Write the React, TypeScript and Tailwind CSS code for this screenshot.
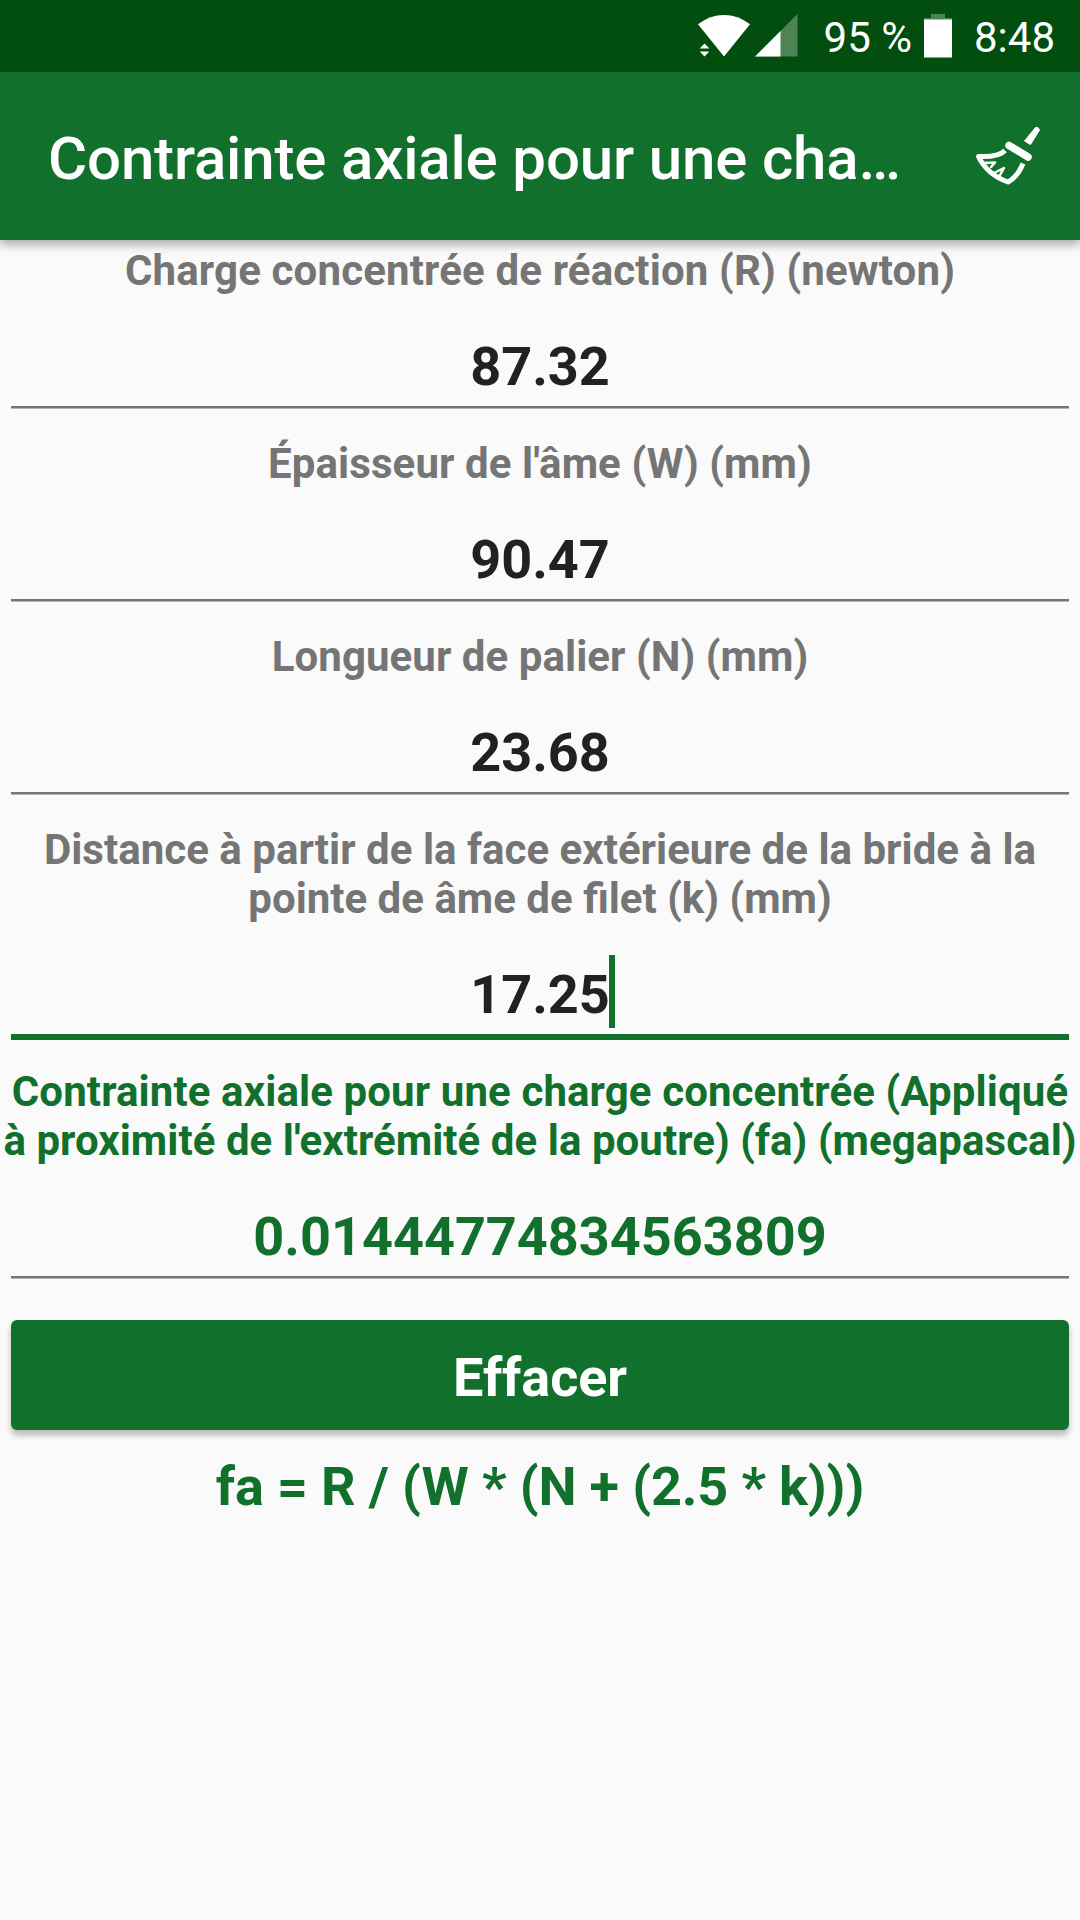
import React from 'react';

interface LabelLine {
  text: string;
  tracking?: string;
}

interface FieldProps {
  label: LabelLine[];
  value: string;
  focused?: boolean;
  result?: boolean;
}

const WifiIcon = () => (
  <svg width="56" height="44" viewBox="0 0 56 44" fill="#fff">
    <path d="M27 42.5 L1 10.3 Q13 1 27 1 Q41 1 53 10.3 Z" />
    <path d="M7.5 29.5 L12.3 34.5 H2.7 Z M7.5 42.5 L2.7 37.5 H12.3 Z" />
  </svg>
);

const SignalIcon = () => (
  <svg width="43" height="44" viewBox="0 0 43 44" fill="#fff">
    <path d="M0 42.5 L42.5 0 V42.5 Z" opacity="0.3" />
    <path d="M0 42.5 L25.5 17 V42.5 Z" />
  </svg>
);

const BatteryIcon = () => (
  <svg width="28" height="44" viewBox="0 0 28 44" fill="#fff">
    <path d="M7 0 H21 V4 H28 V6 H0 V4 H7 Z" opacity="0.3" />
    <path d="M0 5.5 H28 V43.5 H0 Z" />
  </svg>
);

const BroomIcon = () => (
  <svg width="66" height="62" viewBox="0 0 66 62" fill="none" stroke="#fff" strokeLinejoin="round">
    <path d="M59.5 2.5 Q62.5 1.5 63.5 5 L54.5 19.5 L48.5 16 Z" fill="#fff" strokeWidth="1" />
    <path d="M33 20.5 L52 32" strokeWidth="7.5" strokeLinecap="round" />
    <path d="M29 25.5 C24 31 13 32 2.5 31.5 C8 43 18 52 32 57 C39 53 44 46 47 38.5" strokeWidth="5" />
    <path d="M8 38 L19 37.5 L15 42 M18 48 L28 43 L24 50" strokeWidth="2.5" strokeLinecap="round" />
  </svg>
);

const Field: React.FC<FieldProps> = ({ label, value, focused, result }) => (
  <div className="flex flex-col items-center">
    <div
      className={`pt-[6px] text-center text-[42px] leading-[49px] font-bold whitespace-nowrap ${
        result ? 'text-[#12702d]' : 'text-[#757575]'
      }`}
    >
      {label.map((line) => (
        <div key={line.text} className={line.tracking}>
          {line.text}
        </div>
      ))}
    </div>
    <div className="h-[138px] w-full px-[11px] pt-[36px]">
      <div
        className={`flex justify-center text-[54px] leading-[72px] font-bold ${
          result ? 'text-[#12702d]' : 'text-[#212121]'
        } ${
          focused
            ? 'h-[81px] border-b-[6px] border-[#12702d]'
            : 'h-[77px] border-b-2 border-[#757575] shadow-[0_1px_0_#b5b5b5]'
        }`}
      >
        <span className="relative h-[72px]">
          {value}
          {focused && <span className="absolute -top-[4px] left-full -ml-px h-[73px] w-[6px] bg-[#12702d]" />}
        </span>
      </div>
    </div>
  </div>
);

const App: React.FC = () => (
  <div className="flex h-[1920px] w-[1080px] flex-col overflow-hidden bg-[#fafafa] font-['Roboto',sans-serif]">
    <div className="z-20 flex h-[72px] shrink-0 items-center justify-end bg-[#024e0e] pr-[25px] text-[42px] text-white">
      <WifiIcon />
      <span className="ml-[2px]">
        <SignalIcon />
      </span>
      <span className="ml-[26px] pt-[3px]">95 %</span>
      <span className="ml-[12px]">
        <BatteryIcon />
      </span>
      <span className="ml-[22px] pt-[3px]">8:48</span>
    </div>
    <header className="z-10 flex h-[168px] shrink-0 items-center justify-between bg-[#12702d] pr-[38px] pl-[48px] text-white shadow-[0_4px_10px_rgba(0,0,0,0.35)]">
      <h1 className="pt-[5px] text-[60px] font-medium tracking-[-0.165px]">Contrainte axiale pour une cha…</h1>
      <BroomIcon />
    </header>
    <main className="flex flex-col">
      <Field label={[{ text: 'Charge concentrée de réaction (R) (newton)', tracking: 'tracking-[0.15px]' }]} value="87.32" />
      <Field label={[{ text: "Épaisseur de l'âme (W) (mm)", tracking: 'tracking-[0.09px]' }]} value="90.47" />
      <Field label={[{ text: 'Longueur de palier (N) (mm)', tracking: 'tracking-[0.06px]' }]} value="23.68" />
      <Field
        label={[
          { text: 'Distance à partir de la face extérieure de la bride à la', tracking: 'tracking-[0.02px]' },
          { text: 'pointe de âme de filet (k) (mm)' },
        ]}
        value="17.25"
        focused
      />
      <Field
        label={[
          { text: 'Contrainte axiale pour une charge concentrée (Appliqué', tracking: 'tracking-[0.11px]' },
          { text: "à proximité de l'extrémité de la poutre) (fa) (megapascal)", tracking: 'tracking-[0.05px]' },
        ]}
        value="0.01444774834563809"
        result
      />
    </main>
    <button
      type="button"
      className="mx-[11px] mt-[17px] h-[110px] rounded-[6px] bg-[#12702d] pt-[4px] text-[54px] font-bold tracking-[-0.1px] text-white shadow-[0_5px_6px_rgba(0,0,0,0.27)]"
    >
      Effacer
    </button>
    <p className="mt-[25px] text-center text-[54px] leading-[63px] font-bold tracking-[-0.14px] text-[#12702d]">
      fa = R / (W * (N + (2.5 * k)))
    </p>
  </div>
);

export default App;
